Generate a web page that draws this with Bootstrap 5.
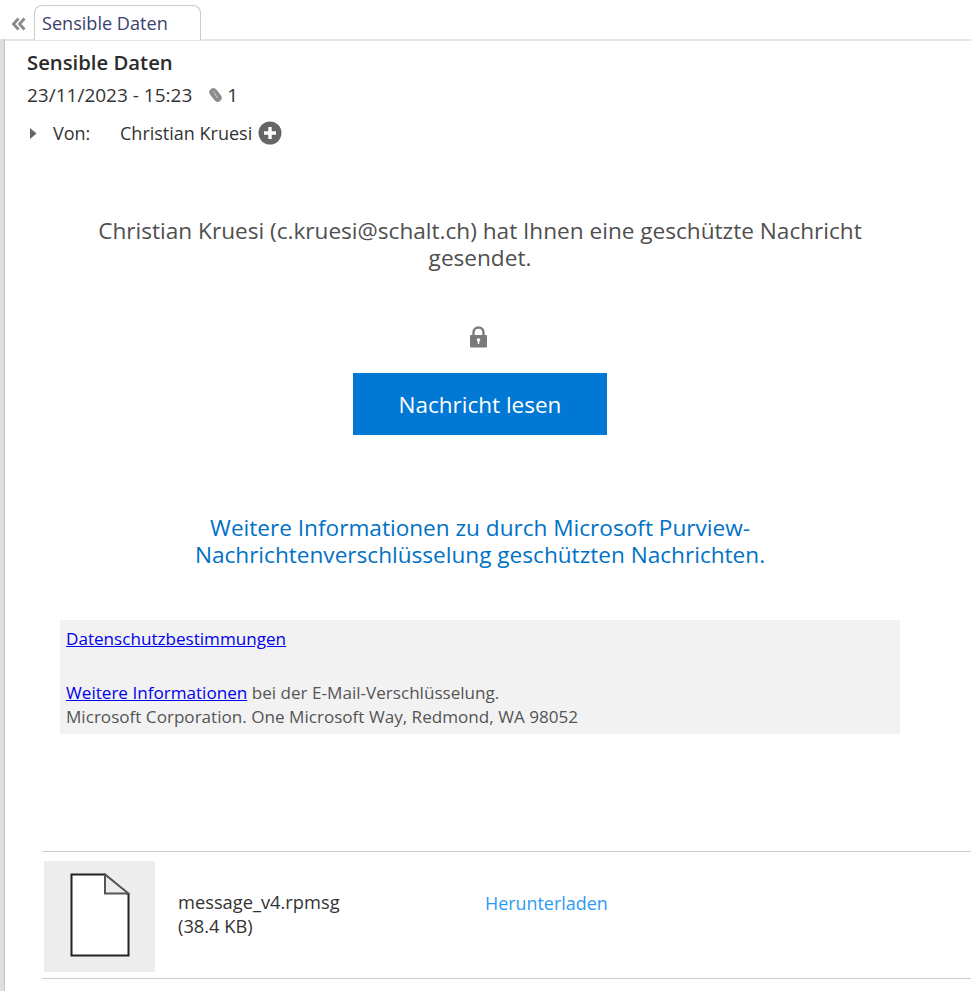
<!DOCTYPE html>
<html lang="de">
<head>
  <meta charset="UTF-8">
  <title>Sensible Daten</title>
  <link href="https://cdn.jsdelivr.net/npm/bootstrap@5.3.0/dist/css/bootstrap.min.css" rel="stylesheet">
  <style>
    html, body { height: 992px; overflow: hidden; }
    body { font-family: "Open Sans", "Liberation Sans", sans-serif; color: #333; background: #fff; }
    .tab-strip { height: 40px; padding-top: 5px; }
    .tab-back { width: 34px; padding: 5px 0 0 11px; }
    .tab-item { width: 167px; height: 35px; padding: 4px 0 0 7px; font-size: 18.1px; color: #3a3f6e; background: #fff;
      border: 1px solid #ccc; border-bottom: 0; border-radius: 8px 8px 0 0; position: relative; z-index: 1; }
    .mail-panel { margin-left: 5px; height: 952px; border-top: 2px solid #e4e4e4; box-shadow: -1px 0 0 #c4c4c4, -5px 0 0 #dedede; margin-top: -1px; }
    .mail-head { padding: 8px 0 0 22px; }
    .mail-subject { font-size: 20.3px; font-weight: 600; line-height: 27px; color: #2b2b2b; }
    .mail-date { font-size: 19px; line-height: 24px; margin-top: 7px; }
    .mail-from { font-size: 18px; line-height: 24px; margin-top: 14px; padding-left: 3px; }
    .from-label { width: 67px; }
    .from-add { margin-left: 6px; }
    .msg-intro { width: 800px; margin: 72px 0 0 75px; font-size: 22.6px; line-height: 27px; color: #4f4f4f; text-align: center; }
    .msg-lock { margin: 52px 0 0 0; height: 25px; padding-left: 464px; }
    .btn-read { width: 254px; height: 62px; margin: 25px 0 0 348px; padding: 2px 0 0; background: #0078d4; color: #fff; font-size: 22.5px;
      border: 0; border-radius: 0; }
    .btn-read:hover { background: #0078d4; color: #fff; }
    .msg-more { width: 600px; margin: 79px 0 0 175px; font-size: 22.6px; line-height: 27px; color: #0072c6; text-align: center; }
    .ms-box { width: 840px; height: 114px; margin: 52px 0 0 55px; padding: 7px 6px; background: #f2f2f2; font-size: 17.1px; line-height: 24px; color: #555; }
    .ms-box a { color: #0000ee; }
    .ms-box-foot { padding-top: 6px; }
    .attach-row { margin: 117px 0 0 37px; height: 128px; border-top: 1px solid #ccc; border-bottom: 1px solid #ccc; padding: 9px 0 0 2px; }
    .attach-thumb { width: 111px; height: 111px; padding-bottom: 4px; background: #ededed; }
    .attach-name { width: 330px; padding-left: 23px; margin-bottom: 12px; font-size: 18.3px; line-height: 24px; }
    .attach-dl { font-size: 17.9px; color: #2b9af3; text-decoration: none; margin-bottom: 32px; }
  </style>
</head>
<body>
  <div class="tab-strip d-flex">
    <div class="tab-back">
      <svg width="15" height="14" viewBox="0 0 15 14" fill="none" stroke="#8a8a8a" stroke-width="2.8"><path d="M7.500 1.500 2.500 7 7.500 12.500M13.500 1.500 8.500 7 13.500 12.500"/></svg>
    </div>
    <div class="tab-item">Sensible Daten</div>
  </div>

  <div class="mail-panel">
    <div class="mail-head">
      <div class="mail-subject">Sensible Daten</div>
      <div class="mail-date d-flex align-items-center">
        <span>23/11/2023 - 15:23</span>
        <svg class="ms-3" width="15" height="16" viewBox="0 0 15 16"><rect x="3.500" y="0.500" width="8" height="15" rx="4" transform="rotate(-38 7.500 8)" fill="#8c8c8c"/><path d="M5.500 4.500 9.500 11" stroke="#ccc" stroke-width="1"/></svg>
        <span class="ms-1">1</span>
      </div>
      <div class="mail-from d-flex align-items-center">
        <svg width="7" height="11" viewBox="0 0 7 11" class="me-3"><path d="M0 0 6.500 5.500 0 11Z" fill="#666"/></svg>
        <span class="from-label">Von:</span>
        <span>Christian Kruesi</span>
        <svg class="from-add" width="24" height="24" viewBox="0 0 24 24"><circle cx="12" cy="12" r="11.500" fill="#666"/><path d="M12 6v12M6 12h12" stroke="#fff" stroke-width="3.400"/></svg>
      </div>
    </div>

    <div class="msg-intro">Christian Kruesi (c.kruesi@schalt.ch) hat Ihnen eine geschützte Nachricht gesendet.</div>
    <div class="msg-lock">
      <svg width="19" height="22" viewBox="0 0 19 22"><path d="M4.500 10V6.500a5 5 0 0 1 10 0V10" fill="none" stroke="#7a7a7a" stroke-width="2.400"/><rect x="1" y="9" width="17" height="12.500" rx="1" fill="#7a7a7a"/><circle cx="9.500" cy="14" r="1.800" fill="#fff"/><rect x="8.800" y="14" width="1.400" height="4" fill="#fff"/></svg>
    </div>
    <button class="btn btn-read d-block" type="button">Nachricht lesen</button>
    <div class="msg-more">Weitere Informationen zu durch Microsoft Purview-Nachrichtenverschlüsselung geschützten Nachrichten.</div>

    <div class="ms-box">
      <a href="#">Datenschutzbestimmungen</a><br><br>
      <div class="ms-box-foot"><a href="#">Weitere Informationen</a> bei der E-Mail-Verschlüsselung.<br>Microsoft Corporation. One Microsoft Way, Redmond, WA 98052</div>
    </div>

    <div class="attach-row d-flex align-items-start">
      <div class="attach-thumb d-flex align-items-center justify-content-center">
        <svg width="60" height="84" viewBox="0 0 60 84" fill="#fff" stroke="#222" stroke-width="2"><path d="M1.500 1.500H35L58.500 21.500V82.500H1.500Z"/><path d="M35 1.500V20.500H58.500Z" fill="#ededed" stroke="#555" stroke-width="2"/></svg>
      </div>
      <div class="attach-name align-self-center">message_v4.rpmsg<br>(38.4 KB)</div>
      <a class="attach-dl align-self-center" href="#">Herunterladen</a>
    </div>
  </div>

  <script src="https://cdn.jsdelivr.net/npm/bootstrap@5.3.0/dist/js/bootstrap.bundle.min.js"></script>
</body>
</html>
